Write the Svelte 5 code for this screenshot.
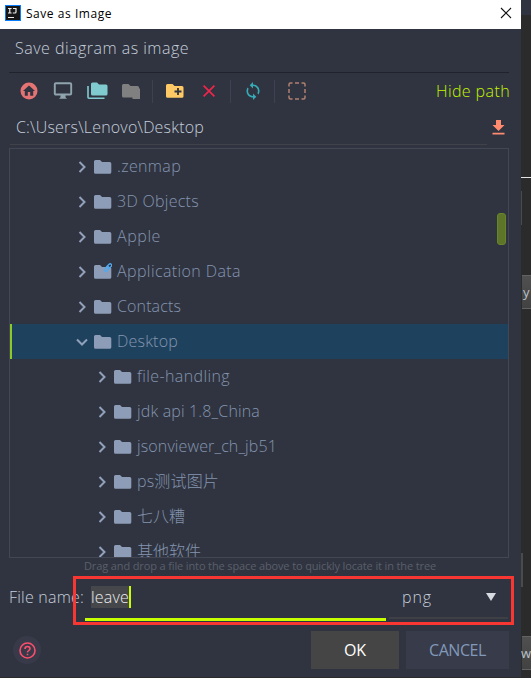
<script>
  const folders = [
    { name: '.zenmap', w: 64 },
    { name: '3D Objects', w: 82 },
    { name: 'Apple', w: 44 },
    { name: 'Application Data', w: 124, link: true },
    { name: 'Contacts', w: 64 },
    { name: 'Desktop', w: 61, open: true },
    { name: 'file-handling', w: 93, child: true },
    { name: 'jdk api 1.8_China', w: 123, child: true },
    { name: 'jsonviewer_ch_jb51', w: 140, child: true },
    { name: 'ps测试图片', w: 82, child: true },
    { name: '七八糟', w: 48, child: true },
    { name: '其他软件', w: 64, child: true }
  ];

  // Spreads a label over its intended width by adjusting the tracking.
  function track(node, width) {
    const apply = () => {
      node.style.letterSpacing = '0px';
      const natural = node.getBoundingClientRect().width;
      node.style.letterSpacing = (width - natural) / node.textContent.length + 'px';
    };
    apply();
    document.fonts?.ready.then(apply);
  }
</script>

<div class="screen">
  <section class="dialog">
    <header class="titlebar">
      <svg class="logo" width="16" height="16" viewBox="0 0 16 16">
        <rect width="16" height="16" fill="#087cfa" />
        <rect x="1" y="1" width="14" height="14" fill="#171717" />
        <path d="M3 3.500h3.600M4.800 3.500v4.500M3 8h3.600M8 3.500h3V7q0 1-1 1H7.800M3 12.500h6" fill="none" stroke="#eee" stroke-width="1.200" />
      </svg>
      <span class="title" use:track={86}>Save as Image</span>
      <svg class="close" width="12" height="12" viewBox="0 0 12 12"><path d="M1 1l10 10M11 1L1 11" stroke="#111" stroke-width="1.1" /></svg>
    </header>

    <div class="heading"><span use:track={174}>Save diagram as image</span></div>

    <nav class="toolbar">
      <svg width="18" height="18" viewBox="0 0 18 18">
        <circle cx="9" cy="9" r="8.5" fill="#e57373" />
        <path d="M9 3.4L3 9h1.8v4.7h3V10h2.4v3.7h3V9H15z" fill="#303440" />
      </svg>
      <svg class="monitor" width="20" height="18" viewBox="0 0 20 18">
        <rect x="1.8" y="1.3" width="16.4" height="11.2" rx="1" fill="none" stroke="#90a4ae" stroke-width="1.9" />
        <path d="M7.5 13h5v2.2l1.5 1.500H6l1.500-1.500z" fill="#90a4ae" />
      </svg>
      <svg class="stack" width="21" height="18" viewBox="0 0 21 18">
        <path d="M4 2q0-1.500 1.500-1.500H10l2 2h7q1.500 0 1.500 1.500v8q0 1.500-1.500 1.500H5.500Q4 13.500 4 12z" fill="#80cbd0" />
        <path d="M1 4v11.200q0 1 1 1h15.500" fill="none" stroke="#80cbd0" stroke-width="1.6" />
      </svg>
      <svg class="module" width="18" height="18" viewBox="0 0 18 18">
        <path d="M0 3.500q0-1.500 1.500-1.500h5l2 2h7q1.500 0 1.500 1.500v1h1v10.500h-7.500v-1.500H1.500Q0 15.500 0 14z" fill="#808080" />
      </svg>
      <i class="sep a"></i>
      <svg class="new" width="18" height="18" viewBox="0 0 18 18">
        <path d="M0 3.500Q0 2 1.500 2h5l2 2h7.500q1.500 0 1.500 1.500v8.700q0 1.500-1.500 1.500H1.500Q0 15.700 0 14.200z" fill="#ffca65" />
        <path d="M8.500 9.500h7M12 6v7" stroke="#303440" stroke-width="1.8" />
      </svg>
      <svg class="delete" width="12" height="12" viewBox="0 0 12 12"><path d="M.6.600l10.800 10.800M11.400.600L.600 11.400" stroke="#f0254b" stroke-width="1.7" /></svg>
      <i class="sep b"></i>
      <svg class="refresh" width="16" height="18" viewBox="4 1 16 22">
        <path d="M12 4V1L8 5l4 4V6c3.310 0 6 2.690 6 6 0 1.010-.250 1.970-.700 2.800l1.460 1.460C19.540 15.030 20 13.570 20 12c0-4.420-3.580-8-8-8zm0 14c-3.310 0-6-2.690-6-6 0-1.010.250-1.970.700-2.800L5.240 7.740C4.460 8.970 4 10.430 4 12c0 4.420 3.580 8 8 8v3l4-4-4-4v3z" fill="#36acb8" />
      </svg>
      <i class="sep c"></i>
      <svg class="marquee" width="18" height="18" viewBox="0 0 18 18">
        <path d="M1 4.500V2.500Q1 1 2.500 1h2M7 1h4M13.500 1h2Q17 1 17 2.500v2M17 7v4M17 13.500v2q0 1.500-1.500 1.500h-2M11 17H7M4.500 17h-2Q1 17 1 15.500v-2M1 11V7" fill="none" stroke="#b08070" stroke-width="1.500" />
      </svg>
      <span class="hide"><span use:track={74}>Hide path</span></span>
    </nav>

    <div class="path">
      <span use:track={188}>C:\Users\Lenovo\Desktop</span>
      <svg width="13" height="15" viewBox="0 0 13 15"><path d="M4 0h5v5h3.500l-6 6-6-6H4zM.5 12.800h12v1.700H.500z" fill="#ff8a70" /></svg>
    </div>

    <div class="tree">
      <div class="rows">
        {#each folders as f}
          <div class="row" class:child={f.child} class:selected={f.open}>
            <svg class="arrow" width="12" height="12" viewBox="0 0 12 12">
              <path d={f.open ? 'M1 3.500l5 5 5-5' : 'M3.500 1l5 5-5 5'} fill="none" stroke="#91a1bb" stroke-width="2" />
            </svg>
            <svg class="folder" width="18" height="18" viewBox="0 0 18 18">
              <path d="M0 3.500Q0 2 1.500 2H6l2 2h7.700q1.600 0 1.600 1.600v8.600q0 1.500-1.600 1.500H1.500Q0 15.700 0 14.200z" fill="#8e9db7" />
              {#if f.link}
                <g fill="none" stroke="#51aaf0" stroke-width="1.300">
                  <rect x="10" y="4.500" width="5.500" height="3" rx="1.500" transform="rotate(-45 12.750 6)" />
                  <rect x="12.500" y="1.700" width="5.500" height="3" rx="1.500" transform="rotate(-45 15.250 3.200)" />
                </g>
              {/if}
            </svg>
            <span use:track={f.w}>{f.name}</span>
          </div>
        {/each}
      </div>
      <div class="thumb"></div>
    </div>

    <div class="hint"><span use:track={352}>Drag and drop a file into the space above to quickly locate it in the tree</span></div>

    <div class="form">
      <label for="fname"><span use:track={75}>File name:</span></label>
      <div class="field" id="fname"><span class="value"><span use:track={38}>leave</span></span></div>
      <div class="combo">
        <span use:track={30}>png</span>
        <svg width="10" height="8" viewBox="0 0 10 8"><path d="M0 0h10L5 8z" fill="#d7dae0" /></svg>
      </div>
      <div class="highlight"></div>
    </div>

    <footer>
      <div class="help">
        <svg width="17" height="17" viewBox="0 0 17 17" fill="none" stroke="#fb4e6d">
          <circle cx="8.500" cy="8.500" r="7.500" stroke-width="1.600" />
          <path d="M6 7Q6 4.500 8.500 4.500T11 6.800Q11 7.800 9.700 8.600T8.500 10.400M8.500 11.700v1.600" stroke-width="1.600" />
        </svg>
      </div>
      <div class="btn ok"><span use:track={22}>OK</span></div>
      <div class="btn cancel"><span use:track={57}>CANCEL</span></div>
    </footer>
  </section>

  <aside class="behind">
    <div class="cap"></div>
    <div class="line"></div>
    <div class="stub s1"></div>
    <div class="piece p1">y</div>
    <div class="stub s2"></div>
    <div class="piece p2">w</div>
  </aside>
</div>

<style>
  :global(body) { margin: 0; background: #2b2b2b; }
  .screen {
    display: flex; width: 531px; height: 678px; overflow: hidden; background: #2b2b2b;
    font: 300 16px/20px "Open Sans", "Noto Sans", "Noto Sans CJK SC", sans-serif; color: #c5cedb;
  }
  .screen span { white-space: nowrap; }
  svg { display: block; flex: none; }
  .dialog { width: 521px; height: 677px; flex: none; display: flex; flex-direction: column; background: #303440; }
  .titlebar { height: 29px; flex: none; display: flex; align-items: flex-start; background: #fff; color: #000; }
  .logo { margin: 5px 5px 0; }
  .title { font-size: 12px; font-weight: 400; line-height: 28px; }
  .close { margin: 7px 9px 0 auto; }
  .heading { height: 43px; flex: none; margin: 0 12px 0 9px; padding-left: 6px; line-height: 38px; border-bottom: 1px solid #20232b; }
  .toolbar { box-sizing: border-box; height: 37px; flex: none; display: flex; align-items: center; padding: 0 11px 1px 20px; }
  .monitor { margin-left: 15px; }
  .stack { margin-left: 14px; }
  .module { margin-left: 14px; }
  .sep { width: 1px; height: 23px; background: #3d4150; }
  .a { margin-left: 12px; }
  .new { margin-left: 13px; }
  .delete { margin-left: 19px; }
  .b { margin-left: 15px; }
  .refresh { margin-left: 14px; }
  .c { margin-left: 13px; }
  .marquee { margin-left: 13px; }
  .hide { margin-left: auto; color: #c3f500; }
  .path { height: 34px; flex: none; display: flex; align-items: center; margin-left: 9px; padding: 0 16px 0 7px; position: relative; }
  .path::after { content: ""; position: absolute; left: 1px; right: 34px; bottom: -1px; height: 1px; background: #414149; }
  .path svg { margin-left: auto; }
  .tree { position: relative; box-sizing: border-box; width: 500px; height: 410px; flex: none; margin: 4px 0 0 9px; border: 1px solid #434753; overflow: hidden; }
  .row { box-sizing: border-box; height: 35px; display: flex; align-items: center; padding: 0 0 0 66px; color: #8495b0; }
  .row.child { padding-left: 86px; }
  .row.selected { background: #1e425d; box-shadow: inset 2px 0 #8ac926; }
  .row span { margin-top: -2px; }
  .folder { margin: 0 5px 0 6px; }
  .thumb { position: absolute; box-sizing: border-box; left: 487px; top: 64px; width: 9px; height: 32px; border: 1px solid #66862a; border-radius: 3px; background: #5d7429; }
  .hint { height: 18px; flex: none; padding-left: 84px; font-size: 11px; font-weight: 400; line-height: 16px; color: #5a5f6b; }
  .form { position: relative; height: 50px; flex: none; display: flex; padding-left: 9px; }
  label { width: 76px; line-height: 42px; }
  .field { box-sizing: border-box; width: 301px; height: 45px; padding: 10px 0 0 6px; border-bottom: 3px solid #c8ff00; color: #eee; }
  .value { display: inline-flex; height: 22px; line-height: 22px; background: #45474a; border-right: 2px solid #c8ff00; }
  .combo { box-sizing: border-box; width: 119px; height: 43px; margin-left: 3px; padding: 0 12px 0 13px; display: flex; align-items: center; justify-content: space-between; border-bottom: 2px solid #3e4045; }
  .highlight { position: absolute; box-sizing: border-box; left: 73px; top: 0; width: 441px; height: 49px; border: 3px solid #f83732; }
  footer { display: flex; padding: 5px 12px 0 13px; }
  .help { width: 28px; height: 28px; margin-top: 5px; display: flex; align-items: center; justify-content: center; border-radius: 50%; background: #383a49; }
  .btn { height: 38px; display: flex; align-items: center; justify-content: center; font-weight: 400; }
  .ok { width: 88px; margin-left: auto; background: #454545; color: #fff; }
  .cancel { width: 103px; margin-left: 7px; background: #383b4a; color: #8299b9; }
  .behind { width: 10px; display: flex; flex-direction: column; overflow: hidden; }
  .cap { height: 15px; flex: none; background: #303440; }
  .line { height: 1px; flex: none; margin-top: 162px; background: #e4e4e4; }
  .stub { box-sizing: border-box; width: 1px; height: 34px; flex: none; background: #4b4b4b; }
  .s1 { margin-top: 13px; }
  .s2 { margin-top: 244px; width: 2px; }
  .piece { box-sizing: border-box; height: 34px; flex: none; margin-left: 1px; border: solid #626262; border-width: 1px 0; background: linear-gradient(#505050, #424242); color: #b9c0c8; font-size: 13px; line-height: 33px; font-weight: 400; }
  .p1 { margin-top: 50px; padding-left: 1px; }
  .p2 { margin-top: 49px; text-indent: -1px; }
</style>
